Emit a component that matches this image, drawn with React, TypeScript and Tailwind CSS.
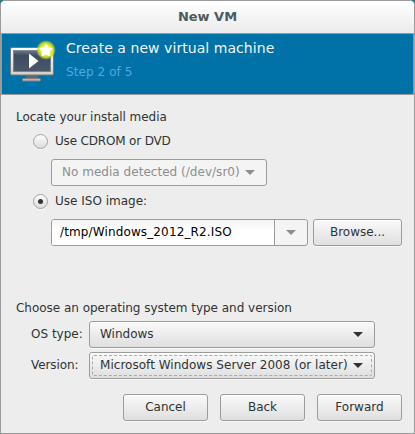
import React from "react";

const face = "border border-[#9c9c9c] rounded-[3px] bg-linear-to-b from-[#fafafa] to-[#dfdfdf] shadow-[0_1px_0_#f9f9f9,inset_0_1px_0_#ffffff]";

function Arrow({ color }: { color: string }) {
  return (
    <svg width="10" height="5" viewBox="0 0 10 5" className="block shrink-0">
      <path d="M0 0H10L5 5Z" fill={color} />
    </svg>
  );
}

function Button({ label, width }: { label: string; width: string }) {
  return (
    <button className={`${face} ${width} h-[27px] shrink-0 flex justify-center pt-[4px] text-[#2e3436] leading-4`}>
      {label}
    </button>
  );
}

function Radio({ checked }: { checked?: boolean }) {
  return (
    <span className="w-[15px] h-[15px] mt-px rounded-full border border-[#a3a3a3] bg-linear-to-b from-[#fdfdfd] to-[#dcdcdc] flex items-center justify-center shadow-[0_1px_0_#f8f8f8]">
      {checked && <span className="w-[5px] h-[5px] rounded-full bg-[#2e3436]" />}
    </span>
  );
}

function VmIcon() {
  return (
    <svg width="48" height="44" viewBox="0 0 48 44" className="block shrink-0">
      <defs>
        <linearGradient id="frame" x1="0" y1="0" x2="0" y2="1">
          <stop offset="0" stopColor="#ffffff" />
          <stop offset="1" stopColor="#cfcfcc" />
        </linearGradient>
        <linearGradient id="screen" x1="0" y1="0" x2="0" y2="1">
          <stop offset="0" stopColor="#68778b" />
          <stop offset=".25" stopColor="#3f4c60" />
          <stop offset="1" stopColor="#4b5669" />
        </linearGradient>
        <radialGradient id="glow">
          <stop offset="0" stopColor="#fffb80" />
          <stop offset=".55" stopColor="#ecf020" />
          <stop offset=".78" stopColor="#c9d820" stopOpacity=".85" />
          <stop offset="1" stopColor="#8fc060" stopOpacity="0" />
        </radialGradient>
      </defs>
      <path d="M17 36H29V39H17Z" fill="#62676b" />
      <rect x="13.5" y="39.5" width="18" height="2.500" rx=".5" fill="#b7b9b8" stroke="#7b7f80" />
      <rect x="1.5" y="8.5" width="43" height="27.500" rx="1.5" fill="url(#frame)" stroke="#77797a" />
      <rect x="4.500" y="11.500" width="37" height="21" fill="url(#screen)" stroke="#77808b" strokeWidth=".8" />
      <path d="M20 14.500V29.500L29.500 22Z" fill="#fff" />
      <circle cx="37" cy="11" r="10" fill="url(#glow)" />
      <path d="M37 5L39 8.700L43.200 9.400L40.300 12.500L41 16.800L37 14.900L33 16.800L33.700 12.500L30.800 9.400L35 8.700Z" fill="#fff" stroke="#fff" strokeWidth="1" strokeLinejoin="round" />
    </svg>
  );
}

export default function App() {
  return (
    <div className="w-[415px] h-[434px] bg-[#287b7e] overflow-hidden text-[12px] leading-4 text-[#2e3436] whitespace-nowrap font-['DejaVu_Sans',sans-serif]">
      <div className="w-full h-full flex flex-col border border-[#9b9b9b] rounded-t-[5px] bg-[#ededed] overflow-hidden">
        <header className="h-8 shrink-0 bg-linear-to-b from-white to-[#ebebeb] text-center font-bold text-[#4b5b61] pt-[8px] text-[13px]">
          New VM
        </header>
        <section className="h-[62px] shrink-0 border border-[#9b9b9b] bg-[#0072a8] flex pl-[7px]">
          <div className="pt-[5px]"><VmIcon /></div>
          <div className="pl-[9px] pt-[6px]">
            <div className="text-[14px] h-5 leading-4 tracking-[0.055px] text-[#f2f5f7]">Create a new virtual machine</div>
            <div className="pt-[4px] tracking-[0.08px] text-[#4fa9dc]">Step 2 of 5</div>
          </div>
        </section>
        <main className="pl-[15px] pt-[14px] flex flex-col">
          <h2 className="tracking-[-0.03px]">Locate your install media</h2>
          <label className="mt-2 ml-[17px] h-4 flex gap-[7px]">
            <Radio />
            <span className="tracking-[-0.17px]">Use CDROM or DVD</span>
          </label>
          <div className="ml-[35px] mt-[10px] w-[216px] h-[27px] border border-[#9c9c9c] rounded-[3px] bg-[#f4f4f4] flex items-center text-[#8b8e8f]">
            <span className="w-[183px] pl-[10px] pb-px tracking-[0.03px]">No media detected (/dev/sr0)</span>
            <span className="pl-[10px]"><Arrow color="#8b8e8f" /></span>
          </div>
          <label className="mt-[7px] ml-[17px] h-4 flex gap-[7px]">
            <Radio checked />
            <span>Use ISO image:</span>
          </label>
          <div className="ml-[35px] mt-[10px] flex gap-[5px]">
            <div className="w-[257px] h-[27px] border border-[#9c9c9c] rounded-[3px] bg-[#f4f4f4] flex overflow-hidden">
              <div className="w-[223px] border-r border-[#9c9c9c] bg-linear-to-b from-[#f3f3f3] to-white to-40% pl-2 pt-[4px] tracking-[0.13px] text-black">/tmp/Windows_2012_R2.ISO</div>
              <div className="flex-1 flex items-center justify-center"><Arrow color="#8b8e8f" /></div>
            </div>
            <Button label="Browse..." width="w-[89px]" />
          </div>
          <h2 className="mt-[54px] tracking-[-0.02px]">Choose an operating system type and version</h2>
          <div className="mt-[5px] ml-[15px] flex">
            <span className="w-[58px] pt-[5px]">OS type:</span>
            <div className={`${face} w-[286px] h-[27px] flex items-center justify-between pl-[10px] pr-[11px]`}>
              <span className="pb-px">Windows</span><Arrow color="#2e3436" />
            </div>
          </div>
          <div className="mt-1 ml-[15px] flex">
            <span className="w-[58px] pt-[5px] tracking-[-0.1px]">Version:</span>
            <div className={`${face} w-[286px] h-[27px] p-[2px]`}>
              <div className="h-full border border-dashed border-[#aaaaaa] rounded-[2px] flex items-center justify-between pl-[7px] pr-[8px]">
                <span className="pb-px tracking-[0.03px]">Microsoft Windows Server 2008 (or later)</span><Arrow color="#2e3436" />
              </div>
            </div>
          </div>
          <footer className="mt-[15px] ml-[107px] flex gap-3">
            <Button label="Cancel" width="w-[85px]" />
            <Button label="Back" width="w-[85px]" />
            <Button label="Forward" width="w-[85px]" />
          </footer>
        </main>
      </div>
    </div>
  );
}
